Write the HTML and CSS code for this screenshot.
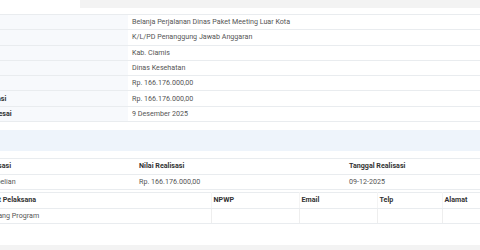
FILE: index.html
```html
<!DOCTYPE html>
<html>
<head>
<meta charset="utf-8">
<link rel="stylesheet" href="styles.css">
</head>
<body>
<div class="top-strip"></div>
<table class="info">
  <colgroup><col class="c-label"><col></colgroup>
  <tr><th>Uraian</th><td>Belanja Perjalanan Dinas Paket Meeting Luar Kota</td></tr>
  <tr><th>Jenis</th><td>K/L/PD Penanggung Jawab Anggaran</td></tr>
  <tr><th>Lokasi</th><td>Kab. Ciamis</td></tr>
  <tr><th>Satker</th><td>Dinas Kesehatan</td></tr>
  <tr><th>Pagu</th><td>Rp. 166.176.000,00</td></tr>
  <tr><th>Nilai Realisasi</th><td>Rp. 166.176.000,00</td></tr>
  <tr><th>Tanggal Selesai</th><td>9 Desember 2025</td></tr>
</table>
<div class="band"></div>
<table class="grid g2">
  <colgroup><col class="g2a"><col class="g2b"><col></colgroup>
  <tr class="hd"><th>Realisasi</th><th>Nilai Realisasi</th><th>Tanggal Realisasi</th></tr>
  <tr><td>Pembelian</td><td>Rp. 166.176.000,00</td><td>09-12-2025</td></tr>
</table>
<table class="grid g3">
  <colgroup><col class="g3a"><col class="g3b"><col class="g3c"><col class="g3d"><col></colgroup>
  <tr class="hd"><th>Unit Pelaksana</th><th>NPWP</th><th>Email</th><th>Telp</th><th>Alamat</th></tr>
  <tr><td>Bidang Program</td><td></td><td></td><td></td><td></td></tr>
</table>
<div class="bottom-strip"></div>
</body>
</html>
```
FILE: styles.css
```css
html, body {
  margin: 0;
  padding: 0;
  background: #ffffff;
  overflow: hidden;
}
body {
  width: 480px;
  height: 250px;
  font-family: Roboto, "Liberation Sans", sans-serif;
  font-size: 7.15px;
  color: #555555;
  position: relative;
}
.top-strip {
  margin-left: 80px;
  height: 8px;
  background: #f3f3f3;
}
table {
  border-collapse: collapse;
  table-layout: fixed;
}
.info {
  margin-top: 6px;
  margin-left: -44px;
  width: 524px;
  border-top: 1px solid #e9ecef;
}
.info .c-label { width: 172px; }
.info th, .info td {
  height: 14.3px;
  padding: 0;
  border-bottom: 1px solid #e9ecef;
  text-align: left;
  white-space: nowrap;
  overflow: hidden;
  line-height: 14px;
}
.info th {
  background: #f7f9fc;
  color: #333333;
  font-weight: 700;
  padding-left: 5px;
}
.info td {
  padding-left: 4px;
}
.band {
  margin-top: 8px;
  height: 21px;
  background: #eef4fb;
}
.grid {
  border-top: 1px solid #e9ecef;
}
.grid th, .grid td {
  height: 14.5px;
  padding: 0;
  border-bottom: 1px solid #e9ecef;
  text-align: left;
  white-space: nowrap;
  overflow: hidden;
  line-height: 14px;
}
.grid th {
  color: #333333;
  font-weight: 700;
}
.g2 {
  margin-top: 7px;
  margin-left: -22px;
  width: 502px;
}
.g2 .g2a { width: 157px; }
.g2 .g2b { width: 210px; }
.g2 th, .g2 td { padding-left: 4px; }
.g3 {
  margin-top: 2px;
  margin-left: -14px;
  width: 494px;
}
.g3 .g3a { width: 225px; }
.g3 .g3b { width: 88px; }
.g3 .g3c { width: 78px; }
.g3 .g3d { width: 65px; }
.g3 th, .g3 td { padding-left: 2px; }
.g3 td + td { border-left: 1px solid #eeeeee; }
.g3 th + th { border-left: 1px solid #f4f4f4; }
.bottom-strip {
  position: absolute;
  left: 0;
  right: 0;
  bottom: 0;
  height: 5px;
  background: #f3f3f3;
}
```
